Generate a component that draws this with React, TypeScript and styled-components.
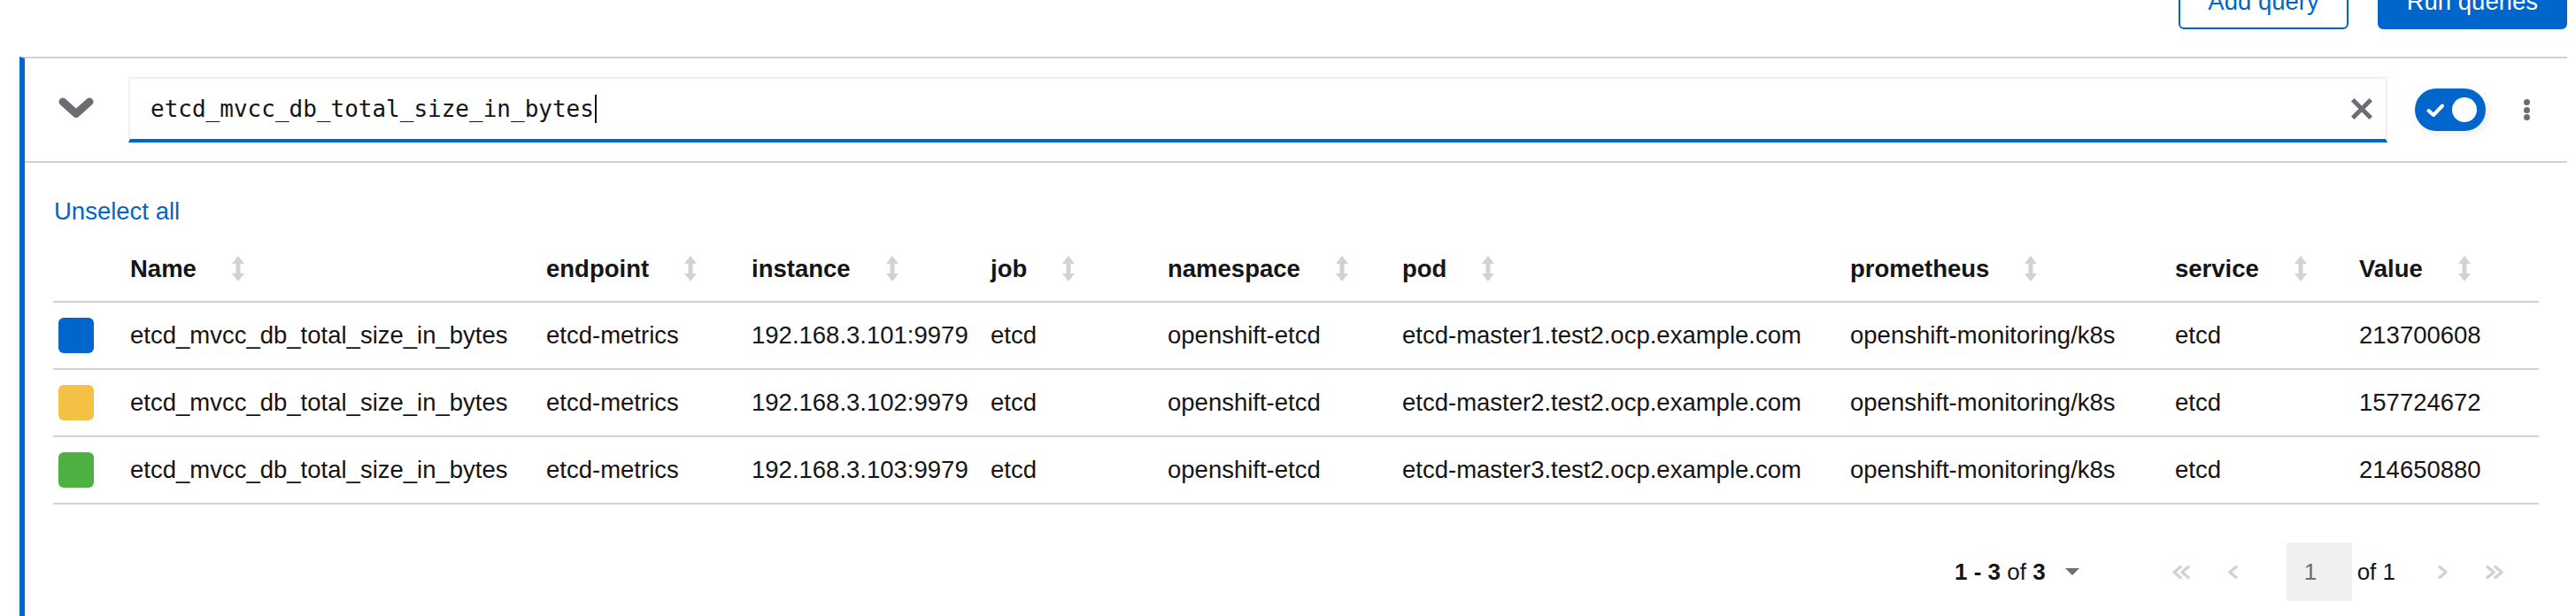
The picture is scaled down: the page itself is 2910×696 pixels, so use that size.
import React from "react";
import styled, { createGlobalStyle } from "styled-components";

const BLUE = "#0066cc";
const BORDER = "#d2d2d2";
const TEXT = "#151515";
const ICON = "#6a6e73";
const LIGHT = "#f0f0f0";

const GlobalStyle = createGlobalStyle`
  html, body {
    margin: 0;
    padding: 0;
    overflow: hidden;
    background: #ffffff;
  }
  body {
    font-family: "Liberation Sans", Arial, sans-serif;
    font-size: 27.5px;
    color: ${TEXT};
  }
  * { box-sizing: border-box; }
`;

const Page = styled.div`
  width: 2910px;
  height: 696px;
  overflow: hidden;
`;

const Toolbar = styled.div`
  display: flex;
  justify-content: flex-end;
  align-items: flex-end;
  gap: 33px;
  height: 33px;
  padding-right: 10px;
`;

const ActionButton = styled.button<{ $primary?: boolean }>`
  flex: none;
  height: 62px;
  padding: 0 31px;
  border: 2px solid ${BLUE};
  border-radius: 6px;
  font: inherit;
  line-height: 58px;
  background: ${(p) => (p.$primary ? BLUE : "#ffffff")};
  color: ${(p) => (p.$primary ? "#ffffff" : BLUE)};
`;

const Panel = styled.section`
  margin: 31px 10px 0 22px;
  border-top: 2px solid ${BORDER};
  border-left: 6px solid ${BLUE};
  padding-bottom: 40px;
`;

const PanelHeader = styled.div`
  display: flex;
  align-items: center;
  height: 118px;
  padding: 0 30px 0 38px;
  border-bottom: 2px solid ${BORDER};
`;

const IconButton = styled.button<{ $w: number; $h: number }>`
  flex: none;
  display: flex;
  align-items: center;
  justify-content: center;
  width: ${(p) => p.$w}px;
  height: ${(p) => p.$h}px;
  padding: 0;
  border: none;
  background: none;
`;

const ExpandButton = styled(IconButton)`
  margin-right: 39px;
  margin-top: -4px;
`;

const QueryField = styled.div`
  flex: 1;
  display: flex;
  align-items: center;
  height: 74px;
  padding: 0 14px 0 23px;
  border: 2px solid ${LIGHT};
  border-bottom: 4px solid ${BLUE};
  background: #ffffff;
`;

const QueryText = styled.div`
  flex: 1;
  display: flex;
  align-items: center;
  font-family: "DejaVu Sans Mono", "Liberation Mono", monospace;
  font-size: 26px;
  line-height: 32px;
  white-space: pre;
  color: ${TEXT};
`;

const Caret = styled.span`
  display: inline-block;
  width: 2px;
  height: 32px;
  margin-left: 1px;
  background: ${TEXT};
`;

const Switch = styled.div`
  flex: none;
  display: flex;
  align-items: center;
  justify-content: space-between;
  width: 80px;
  height: 48px;
  margin-left: 31px;
  padding: 0 10px 0 13px;
  border-radius: 24px;
  background: ${BLUE};
  box-shadow: 3px 4px 10px rgba(3, 3, 3, 0.08);
`;

const Knob = styled.span`
  width: 28px;
  height: 28px;
  border-radius: 50%;
  background: #ffffff;
`;

const Kebab = styled(IconButton)`
  flex-direction: column;
  gap: 1.5px;
  margin-left: 30px;
`;

const Dot = styled.span`
  width: 7px;
  height: 7px;
  border-radius: 50%;
  background: ${ICON};
`;

const PanelBody = styled.div`
  padding: 34px 32px 0 32px;
`;

const LinkButton = styled.button`
  display: block;
  height: 42px;
  padding: 0 0 0 1px;
  border: none;
  background: none;
  font: inherit;
  line-height: 42px;
  color: ${BLUE};
`;

const Table = styled.table`
  width: 100%;
  margin-top: 7px;
  border-collapse: separate;
  border-spacing: 0;
  table-layout: fixed;
`;

const Col = styled.col<{ $width: number }>`
  width: ${(p) => p.$width}px;
`;

const Th = styled.th`
  box-sizing: border-box;
  height: 75px;
  padding: 0;
  border-bottom: 2px solid ${BORDER};
  text-align: left;
  font-weight: 700;
  white-space: nowrap;
  vertical-align: middle;
`;

const Td = styled.td`
  box-sizing: border-box;
  height: 76px;
  padding: 0;
  border-bottom: 2px solid ${BORDER};
  white-space: nowrap;
  vertical-align: middle;
`;

const HeaderLabel = styled.span`
  display: inline-flex;
  align-items: center;
  gap: 40px;
`;

const Swatch = styled.span<{ $color: string }>`
  display: block;
  width: 40px;
  height: 40px;
  margin-left: 6px;
  border-radius: 6px;
  background: ${(p) => p.$color};
`;

const Pagination = styled.div`
  display: flex;
  justify-content: flex-end;
  align-items: center;
  height: 66px;
  margin-top: 43px;
  padding-right: 21px;
  font-size: 26px;
`;

const PerPage = styled.div`
  display: flex;
  align-items: center;
  gap: 22px;
  margin-right: 86px;
  white-space: pre;
`;

const NavButton = styled(IconButton)`
  height: 66px;
`;

const PageInput = styled.div`
  width: 74px;
  height: 66px;
  margin-left: 32px;
  padding-left: 20px;
  line-height: 66px;
  background: ${LIGHT};
  color: ${ICON};
`;

const OfPages = styled.span`
  margin: 0 25px 0 6px;
`;

const AngleDown = () => (
  <svg width="40" height="24" viewBox="0 0 40 24">
    <polyline
      points="5,5 20,18.5 35,5"
      fill="none"
      stroke={ICON}
      strokeWidth="9"
      strokeLinecap="round"
      strokeLinejoin="round"
    />
  </svg>
);

const TimesIcon = () => (
  <svg width="26" height="26" viewBox="0 0 26 26">
    <path d="M4.5 4.5 L21.5 21.5 M21.5 4.5 L4.5 21.5" stroke={ICON} strokeWidth="5" strokeLinecap="square" />
  </svg>
);

const CheckIcon = () => (
  <svg width="20" height="15" viewBox="0 0 20 15">
    <polyline
      points="2.5,8 8,13 18,2.5"
      fill="none"
      stroke="#ffffff"
      strokeWidth="4"
      strokeLinecap="round"
      strokeLinejoin="round"
    />
  </svg>
);

const SortIcon = () => (
  <svg width="14" height="29" viewBox="0 0 14 29">
    <path d="M7 0 L14 9 H9.5 V20 H14 L7 29 L0 20 H4.5 V9 H0 Z" fill={BORDER} />
  </svg>
);

const CaretDown = () => (
  <svg width="16" height="8" viewBox="0 0 16 8">
    <path d="M0 0 H16 L8 8 Z" fill={ICON} />
  </svg>
);

const Chevron = ({ dir, double }: { dir: "left" | "right"; double?: boolean }) => {
  const single = dir === "left" ? "10,1.5 3,7.5 10,13.5" : "2,1.5 9,7.5 2,13.5";
  const second = dir === "left" ? "19,1.5 12,7.5 19,13.5" : "11,1.5 18,7.5 11,13.5";
  return (
    <svg width={double ? 21 : 12} height="15" viewBox={`0 0 ${double ? 21 : 12} 15`}>
      <polyline points={single} fill="none" stroke={BORDER} strokeWidth="3.5" strokeLinejoin="round" strokeLinecap="round" />
      {double && (
        <polyline points={second} fill="none" stroke={BORDER} strokeWidth="3.5" strokeLinejoin="round" strokeLinecap="round" />
      )}
    </svg>
  );
};

const columns = [
  { key: "name", label: "Name", width: 470 },
  { key: "endpoint", label: "endpoint", width: 232 },
  { key: "instance", label: "instance", width: 270 },
  { key: "job", label: "job", width: 200 },
  { key: "namespace", label: "namespace", width: 265 },
  { key: "pod", label: "pod", width: 506 },
  { key: "prometheus", label: "prometheus", width: 367 },
  { key: "service", label: "service", width: 208 },
  { key: "value", label: "Value", width: 203 },
] as const;

type Row = Record<(typeof columns)[number]["key"], string> & { color: string };

const rows: Row[] = [1, 2, 3].map((n, i) => ({
  color: ["#0066cc", "#f4c145", "#4cb140"][i],
  name: "etcd_mvcc_db_total_size_in_bytes",
  endpoint: "etcd-metrics",
  instance: `192.168.3.10${n}:9979`,
  job: "etcd",
  namespace: "openshift-etcd",
  pod: `etcd-master${n}.test2.ocp.example.com`,
  prometheus: "openshift-monitoring/k8s",
  service: "etcd",
  value: ["213700608", "157724672", "214650880"][i],
}));

export default function App() {
  return (
    <Page>
      <GlobalStyle />
      <Toolbar>
        <ActionButton>Add query</ActionButton>
        <ActionButton $primary>Run queries</ActionButton>
      </Toolbar>
      <Panel>
        <PanelHeader>
          <ExpandButton $w={40} $h={24} aria-label="Collapse">
            <AngleDown />
          </ExpandButton>
          <QueryField>
            <QueryText>
              etcd_mvcc_db_total_size_in_bytes
              <Caret />
            </QueryText>
            <IconButton $w={26} $h={26} aria-label="Clear">
              <TimesIcon />
            </IconButton>
          </QueryField>
          <Switch role="switch" aria-checked="true">
            <CheckIcon />
            <Knob />
          </Switch>
          <Kebab $w={32} $h={30} aria-label="Actions">
            <Dot />
            <Dot />
            <Dot />
          </Kebab>
        </PanelHeader>
        <PanelBody>
          <LinkButton>Unselect all</LinkButton>
          <Table>
            <colgroup>
              <Col $width={87} />
              {columns.map((c) => (
                <Col key={c.key} $width={c.width} />
              ))}
            </colgroup>
            <thead>
              <tr>
                <Th />
                {columns.map((c) => (
                  <Th key={c.key}>
                    <HeaderLabel>
                      {c.label}
                      <SortIcon />
                    </HeaderLabel>
                  </Th>
                ))}
              </tr>
            </thead>
            <tbody>
              {rows.map((r, i) => (
                <tr key={i}>
                  <Td>
                    <Swatch $color={r.color} />
                  </Td>
                  {columns.map((c) => (
                    <Td key={c.key}>{r[c.key]}</Td>
                  ))}
                </tr>
              ))}
            </tbody>
          </Table>
          <Pagination>
            <PerPage>
              <span>
                <b>1 - 3</b> of <b>3</b>
              </span>
              <CaretDown />
            </PerPage>
            <NavButton $w={58} $h={66} aria-label="First page">
              <Chevron dir="left" double />
            </NavButton>
            <NavButton $w={58} $h={66} aria-label="Previous page">
              <Chevron dir="left" />
            </NavButton>
            <PageInput>1</PageInput>
            <OfPages>of 1</OfPages>
            <NavButton $w={58} $h={66} aria-label="Next page">
              <Chevron dir="right" />
            </NavButton>
            <NavButton $w={58} $h={66} aria-label="Last page">
              <Chevron dir="right" double />
            </NavButton>
          </Pagination>
        </PanelBody>
      </Panel>
    </Page>
  );
}
